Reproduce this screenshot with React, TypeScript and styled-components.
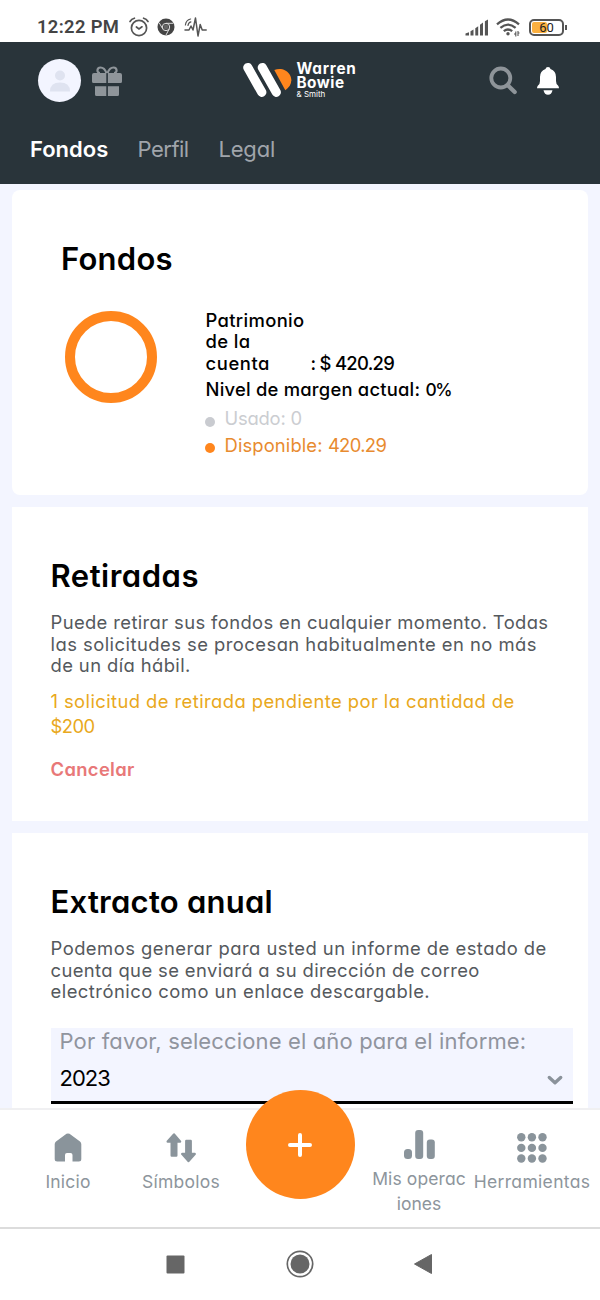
import React from 'react';
import styled, { createGlobalStyle } from 'styled-components';

const c = {
  dark: '#29343a', page: '#f3f5ff', orange: '#ff861d', muted: '#8d959c', body: '#55595d', sys: '#666',
};

const Global = createGlobalStyle`
  * { box-sizing: border-box; }
  body { margin: 0; background: #fff; font-family: Inter, "Open Sans", sans-serif; font-feature-settings: "cv11"; }
  h1, h2, p { margin: 0; }
`;

const Screen = styled.div`
  width: 600px; height: 1300px; display: flex; flex-direction: column; overflow: hidden; background: #fff;
`;
const Line = styled.span<{ $t?: number }>`
  display: block; white-space: pre; letter-spacing: ${p => p.$t ?? 0}px;
`;
const Num = styled.span<{ $t: number; $s?: number }>`
  letter-spacing: ${p => p.$t}px; font-size: ${p => p.$s ?? 18.4}px;
`;

/* status bar */
const StatusBar = styled.div`
  flex: none; height: 42px; padding: 12px 36px 0 37px; display: flex; align-items: center; color: #444;
`;
const Clock = styled.span`
  font: 600 18.4px/28px Roboto, sans-serif; letter-spacing: 0.35px; width: 91.5px; white-space: nowrap;
`;
const StatusIcons = styled.div<{ $gap?: number }>`display: flex; align-items: center; gap: ${p => p.$gap ?? 0}px;`;
const Spacer = styled.div`flex: 1;`;
const Gap = styled.div<{ $w: number }>`flex: none; width: ${p => p.$w}px;`;
const Battery = styled.div`
  position: relative; width: 35px; height: 17px; border: 2px solid #555; border-radius: 5px; padding: 1px; margin-left: 9px;
  display: flex;
  &::after { content: ''; position: absolute; right: -5px; top: 4px; width: 2px; height: 5px; background: #555; }
`;
const Charge = styled.div`width: 15px; height: 100%; background: #fbb040; border-radius: 2px;`;
const ChargeText = styled.span`
  position: absolute; inset: 0; text-align: center; font: 400 13px/13px Roboto, sans-serif; color: #222;
`;

/* header */
const Header = styled.header`
  flex: none; height: 142px; background: ${c.dark}; display: flex; flex-direction: column;
`;
const TopRow = styled.div`height: 77px; display: flex; align-items: center; padding: 0 40.5px 0 38px;`;
const Avatar = styled.div`
  width: 43px; height: 43px; border-radius: 50%; background: ${c.page}; display: grid; place-items: center; margin-right: 11px;
`;
const Logo = styled.div`display: flex; align-items: flex-start; margin-left: 120.5px; height: 37px;`;
const LogoText = styled.div`
  color: #fff; font-weight: 700; font-size: 15.3px; line-height: 14px; margin-left: 5px;
  small { display: block; font-weight: 400; font-size: 8px; line-height: 8px; letter-spacing: 0; }
`;
const Tabs = styled.nav`display: flex; padding: 14px 0 0 30px; font-size: 22px; line-height: 32px;`;
const Tab = styled.div<{ $active?: boolean; $w: number }>`
  width: ${p => p.$w}px; color: ${p => (p.$active ? '#fff' : '#a0a5ab')}; font-weight: ${p => (p.$active ? 600 : 400)};
`;

/* content */
const Content = styled.main`
  flex: 1; min-height: 0; overflow: hidden; background: ${c.page}; padding: 6px 12px 0;
  display: flex; flex-direction: column; gap: 12px;
`;
const Card = styled.section<{ $h: number; $r?: number; $pl?: number }>`
  flex: none; height: ${p => p.$h}px; border-radius: ${p => p.$r ?? 0}px; background: #fff;
  padding: 49px 15px 0 ${p => p.$pl ?? 38.5}px;
`;
const Title = styled.h2`font-size: 31px; line-height: 40px; font-weight: 600; color: #000;`;
const Funds = styled.div`display: flex; padding: 30px 0 0 4px;`;
const Ring = styled.div`
  width: 92px; height: 92px; margin: 2px 48.5px 0 0; border: 10.5px solid ${c.orange}; border-radius: 50%;
`;
const Figures = styled.div`font-size: 18.4px; color: #000; font-weight: 500; padding-top: 0.7px;`;
const Equity = styled.div`display: flex; align-items: flex-end; line-height: 21.5px; margin-bottom: 2px;`;
const EquityLabel = styled.div`width: 105px;`;
const Margin = styled.div`line-height: 26px; margin-bottom: 2.3px;`;
const Legend = styled.div<{ $dot: string; $c: string }>`
  display: flex; align-items: center; line-height: 26.3px; font-weight: 400; color: ${p => p.$c};
  &::before { content: ''; width: 10px; height: 10px; margin: 7px 9.5px 0 -0.5px; border-radius: 50%; background: ${p => p.$dot}; }
`;
const Body = styled.p`margin-top: 16.1px; font-size: 18.4px; line-height: 21.5px; color: ${c.body};`;
const Pending = styled.p`margin-top: 12px; font-size: 18.4px; line-height: 25.7px; color: #e9a820;`;
const Cancel = styled.div`margin-top: 16px; font-size: 18.4px; line-height: 26px; font-weight: 600; color: #e87878;`;
const Select = styled.div`
  margin-top: 25.4px; height: 76px; background: ${c.page}; border-bottom: 3px solid #000; padding: 0 9px;
`;
const SelectLabel = styled.div`font-size: 22px; line-height: 26px; color: #90949e;`;
const SelectValue = styled.div`
  display: flex; justify-content: space-between; align-items: center; font-size: 22px; line-height: 28px; padding-top: 10px; color: #000;
  svg { margin-top: 5px; }
`;

/* navigation */
const BottomNav = styled.nav`
  flex: none; height: 121px; border-top: 2px solid #f0f0f2; border-bottom: 2px solid #dcdcdc; background: #fff;
  display: grid; grid-template-columns: 136px 90px 148px 90px 136px; font-size: 17.5px; line-height: 25px; color: ${c.muted};
`;
const NavItem = styled.div<{ $pt?: number; $gap?: number }>`
  display: flex; flex-direction: column; align-items: center; padding-top: ${p => p.$pt ?? 23}px; gap: ${p => p.$gap ?? 6}px; text-align: center;
`;
const Fab = styled.button`
  position: relative; top: -20px; width: 109px; height: 109px; margin: 0 auto; padding: 0; border: 0; border-radius: 50%;
  background: ${c.orange}; display: grid; place-items: center;
`;
const SystemNav = styled.div`flex: none; height: 71px; background: #fff; display: flex; align-items: center;
  padding: 0 168px 1px 166px; justify-content: space-between;`;

const Alarm = () => (
  <svg width="20" height="20" viewBox="0 0 20 20" fill="none" stroke="#555" strokeWidth="1.7" strokeLinecap="round">
    <circle cx="10" cy="11" r="7.6" /><path d="M1 4.5 Q2.5 2 5.4 1.2M19 4.5 Q17.5 2 14.6 1.2M7.4 10l2.6 2 3-2.2" />
  </svg>
);
const Chrome = () => (
  <svg width="18" height="18" viewBox="0 0 18 18">
    <circle cx="9" cy="9" r="8.5" fill="#444" />
    <g fill="none" stroke="#ddd" strokeWidth="1">
      <circle cx="9" cy="9" r="3.7" /><path d="M9 5.3h7.3M5.7 10.8L2.2 4.8M12.3 10.8L8.8 17.4" />
    </g>
    <circle cx="9" cy="9" r="2.4" fill="#666" />
  </svg>
);
const Pulse = () => (
  <svg width="23" height="21" viewBox="0 0 23 21" fill="none" stroke="#555" strokeWidth="1.5" strokeLinejoin="round" strokeLinecap="round">
    <path d="M1 13h4l2-4 2 4 2.5-12 2.5 18 2.2-11.5 2 5.5h4" /><path d="M1.4 8q.6-5 5.2-6M4 8.5q.3-2.8 2.9-3.6" strokeWidth="1.2" />
  </svg>
);
const Signal = () => (
  <svg width="24" height="17" viewBox="0 0 24 17" fill="#555">
    <path d="M.5 16.500V14.500L4 13.200V16.500zM5.500 16.500V12.300L8.500 10.500V16.500zM10.300 16.500V9.200L13.200 7.200V16.500zM15 16.500V5.800L18 3.600V16.500zM19.900 16.500V2.200L23 .5V16.500z" />
  </svg>
);
const Wifi = () => (
  <svg width="24" height="19" viewBox="0 0 24 19" fill="none" stroke="#555" strokeWidth="2.3">
    <path d="M1 6.3Q12-3.4 23 6.3M4.4 9.9Q12 3.3 19.6 9.9M7.8 13.2Q12 9.8 16.2 13.2" />
    <circle cx="12" cy="15.8" r="1.7" fill="#555" stroke="none" /><path d="M19.8 18.500v-5M22 13v5M18 16h1.800M23.500 15h-1.500" strokeWidth="1.100" />
  </svg>
);
const Person = () => (
  <svg width="20" height="22" viewBox="0 0 20 22" fill="#dfe3f0"><circle cx="10" cy="5.5" r="5" /><path d="M0 21.5q0-9 10-9t10 9z" /></svg>
);
const Gift = () => (
  <svg width="30" height="30" viewBox="0 0 30 30" fill="#8f959a">
    <path d="M2 7h12.3v10H1.5Q0 17 0 15.5V9Q0 7 2 7zM15.9 7H28q2 0 2 2v6.5q0 1.5-1.5 1.5H15.9zM3 20.3h11.3V30H4.5Q3 30 3 28.500zM15.900 20.300H27v8.200q0 1.500-1.500 1.500h-9.600z" />
    <path d="M14.5 7.200Q12.500 1.500 8.500 1.500C4.500 1.500 4.500 7 8 7M15.500 7.200Q17.500 1.500 21.500 1.500C25.500 1.500 25.500 7 22 7" fill="none" stroke="#8f959a" strokeWidth="2.200" />
  </svg>
);
const LogoMark = () => (
  <svg width="49" height="36" viewBox="0 0 49 36">
    <path d="M4.800 5.500L18.800 30.300M19.300 5.500L33.300 30.300" stroke="#fff" strokeWidth="9.200" strokeLinecap="round" />
    <path d="M31.300 8C36.500 5.800 43.500 7 46.800 12.800C50 18.500 48 24.500 42.300 28.300z" fill="#ff861d" />
  </svg>
);
const Search = () => (
  <svg width="29" height="29" viewBox="0 0 29 29" fill="none" stroke="#8e9499" strokeLinecap="round">
    <circle cx="11.800" cy="12" r="9.500" strokeWidth="3.800" /><path d="M19 19.500L25.700 26" strokeWidth="4.200" />
  </svg>
);
const Bell = () => (
  <svg width="24" height="28" viewBox="0 0 24 28" fill="#fff">
    <path d="M9.500 2Q9.800 0 12 0t2.500 2Q20 4 20 10v4q0 3 2 4.500Q23 19.500 23 21.300H1Q1 19.500 2 18.500q2-1.500 2-4.500V10Q4 4 9.500 2zM7.500 23.200h9Q15.500 27.700 12 27.700T7.500 23.200z" />
  </svg>
);

export default function App() {
  return (
    <>
      <Global />
      <Screen>
        <StatusBar>
          <Clock>12:22 PM</Clock>
          <StatusIcons $gap={8.5}><Alarm /><Chrome /><Pulse /></StatusIcons>
          <Spacer />
          <StatusIcons><Signal /><Gap $w={7} /><Wifi /><Battery><Charge /><ChargeText>60</ChargeText></Battery></StatusIcons>
        </StatusBar>
        <Header>
          <TopRow>
            <Avatar><Person /></Avatar>
            <Gift />
            <Logo>
              <LogoMark />
              <LogoText><Line $t={0.75}>Warren</Line><Line $t={0.5}>Bowie</Line><small>&amp; Smith</small></LogoText>
            </Logo>
            <Spacer />
            <Search /><Gap $w={17.5} /><Bell />
          </TopRow>
          <Tabs>
            <Tab $active $w={107.5}><Line>Fondos</Line></Tab>
            <Tab $w={81}><Line $t={-0.5}>Perfil</Line></Tab>
            <Tab $w={80}><Line $t={-0.2}>Legal</Line></Tab>
          </Tabs>
        </Header>
        <Content>
          <Card $h={305} $r={8} $pl={49}>
            <Title><Line $t={0.25}>Fondos</Line></Title>
            <Funds>
              <Ring />
              <Figures>
                <Equity>
                  <EquityLabel><Line $t={0.35}>Patrimonio</Line><Line $t={0.4}>de la</Line><Line $t={0.6}>cuenta</Line></EquityLabel>
                  <Line $t={-0.7}>: $ 420.29</Line>
                </Equity>
                <Margin><Line $t={0.22}>Nivel de margen actual: <Num $t={-1.3} $s={17.4}>0%</Num></Line></Margin>
                <Legend $dot="#c9cbd0" $c="#cbcdd1"><Line $t={-0.2}>Usado: 0</Line></Legend>
                <Legend $dot={c.orange} $c="#e88b30"><Line $t={0.12}>Disponible: <Num $t={-0.65}>420.29</Num></Line></Legend>
              </Figures>
            </Funds>
          </Card>
          <Card $h={314}>
            <Title><Line $t={0.5}>Retiradas</Line></Title>
            <Body>
              <Line $t={0.38}>Puede retirar sus fondos en cualquier momento. Todas</Line>
              <Line $t={0.47}>las solicitudes se procesan habitualmente en no más</Line>
              <Line $t={0.4}>de un día hábil.</Line>
            </Body>
            <Pending><Line $t={0.42}>1 solicitud de retirada pendiente por la cantidad de</Line><Line $t={-0.5}>$200</Line></Pending>
            <Cancel><Line $t={0.35}>Cancelar</Line></Cancel>
          </Card>
          <Card $h={314}>
            <Title><Line $t={0.25}>Extracto anual</Line></Title>
            <Body>
              <Line $t={0.48}>Podemos generar para usted un informe de estado de</Line>
              <Line $t={0.39}>cuenta que se enviará a su dirección de correo</Line>
              <Line $t={0.48}>electrónico como un enlace descargable.</Line>
            </Body>
            <Select>
              <SelectLabel><Line $t={0.14}>Por favor, seleccione el año para el informe:</Line></SelectLabel>
              <SelectValue>
                <Line $t={-1}>2023</Line>
                <svg width="18" height="12" viewBox="0 0 18 12" fill="none" stroke="#8a929a" strokeWidth="3.400" strokeLinecap="round" strokeLinejoin="round"><path d="M3.300 3.500l5.700 5.200L14.700 3.500" /></svg>
              </SelectValue>
            </Select>
          </Card>
        </Content>
        <BottomNav>
          <NavItem>
            <svg width="28" height="30" viewBox="0 0 28 30" fill="#8a949b"><path d="M12.500.8Q14 0 15.500.8L26 8.500q1.300 1 1.300 2.700V26q0 2.500-2.500 2.500H18.500V22q0-2-2-2h-3.500q-2 0-2 2v6.500H3.200Q.7 28.500.7 26V11.200Q.7 9.500 2 8.500z" /></svg>
            <Line $t={0.2}>Inicio</Line>
          </NavItem>
          <NavItem>
            <svg width="30" height="30" viewBox="0 0 30 30" fill="#8a949b" stroke="#8a949b" strokeWidth="2.400" strokeLinejoin="round"><path d="M8 1.500L14 8.500H10.300V22.500H5.700V8.500H1.700zM20.300 8H24.700V21H28.700L22.500 28 16.300 21h4z" /></svg>
            <Line $t={0.25}>Símbolos</Line>
          </NavItem>
          <Fab>
            <svg width="26" height="26" viewBox="0 0 26 26" stroke="#fff" strokeWidth="4" strokeLinecap="round"><path d="M13 3v20M3 13h20" /></svg>
          </Fab>
          <NavItem $pt={20}>
            <svg width="32" height="30" viewBox="0 0 32 30" fill="#8a949b"><rect x="1" y="19" width="8" height="10" rx="3.500" /><rect x="12.200" y="0" width="8" height="29" rx="3" /><rect x="23.800" y="9.500" width="8" height="19.500" rx="3" /></svg>
            <div><Line $t={0.1}>Mis operac</Line><Line>iones</Line></div>
          </NavItem>
          <NavItem>
            <svg width="30" height="30" viewBox="0 0 30 30" fill="#8a949b">
              {[4.3, 14.9, 25.5].map(y => [4.3, 14.9, 25.5].map(x => <circle key={`${x}-${y}`} cx={x} cy={y} r="4.200" />))}
            </svg>
            <Line $t={0.33}>Herramientas</Line>
          </NavItem>
        </BottomNav>
        <SystemNav>
          <svg width="19" height="19" viewBox="0 0 19 19"><rect x=".5" y=".5" width="18" height="18" rx="1" fill={c.sys} /></svg>
          <svg width="28" height="28" viewBox="0 0 28 28"><circle cx="14" cy="14" r="12.700" fill="none" stroke={c.sys} strokeWidth="1.700" /><circle cx="14" cy="14" r="9.500" fill={c.sys} /></svg>
          <svg width="18" height="22" viewBox="0 0 18 22"><path d="M17.500 1.500v19L.500 11z" fill={c.sys} stroke={c.sys} strokeLinejoin="round" /></svg>
        </SystemNav>
      </Screen>
    </>
  );
}
